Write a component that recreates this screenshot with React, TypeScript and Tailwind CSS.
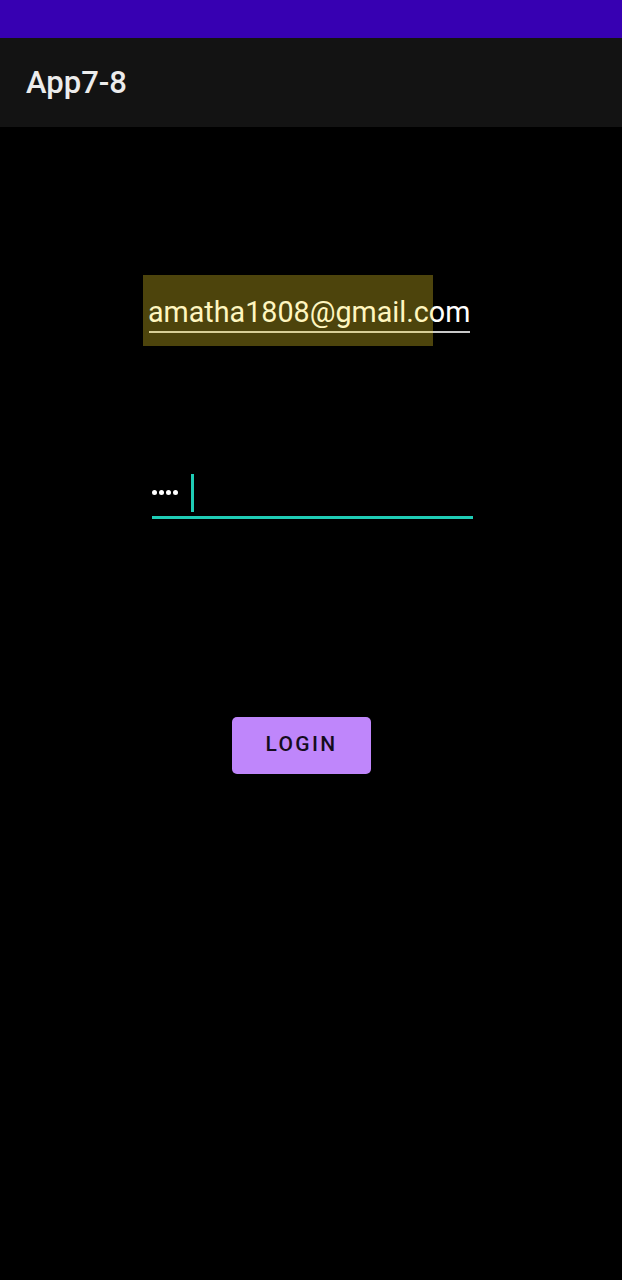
import React from "react";

export default function App() {
  return (
    <div className="w-[622px] h-[1280px] bg-black flex flex-col" style={{ fontFamily: "Roboto, 'Liberation Sans', sans-serif" }}>
      <div className="h-[38px] bg-[#3700b2]" />
      <div className="h-[89px] bg-[#131313] flex items-center pl-[26px]">
        <span className="text-[31px] font-medium text-[#ececec] leading-none">App7-8</span>
      </div>
      <div className="flex flex-col">
        <div className="relative ml-[148px] mt-[166px] w-[322px]">
          <div className="text-[28.7px] leading-[38px] text-white whitespace-nowrap">amatha1808@gmail.com</div>
          <div className="h-[1.5px] bg-[#c8c8c8] ml-[1px]" />
          <div className="absolute left-[-5px] top-[-18px] w-[290px] h-[71px] bg-[rgba(255,225,40,0.3)]" />
        </div>
        <div className="ml-[152px] mt-[140px] w-[321px] flex flex-col">
          <div className="h-[40px] flex items-center">
            <span className="flex gap-[2px]">
              <span className="w-[5px] h-[5px] rounded-full bg-white" />
              <span className="w-[5px] h-[5px] rounded-full bg-white" />
              <span className="w-[5px] h-[5px] rounded-full bg-white" />
              <span className="w-[5px] h-[5px] rounded-full bg-white" />
            </span>
            <span className="ml-[13px] w-[3px] h-[38px] bg-[#1fcdb6]" />
          </div>
          <div className="mt-[3px] h-[3px] bg-[#1fcdb6]" />
        </div>
        <div className="ml-[232px] mt-[198px]">
          <button className="w-[139px] h-[57px] rounded-[5px] bg-[#bf86fb] text-[#150c1d] text-[21px] font-medium tracking-[2.3px] flex items-center justify-center">
            LOGIN
          </button>
        </div>
      </div>
    </div>
  );
}
